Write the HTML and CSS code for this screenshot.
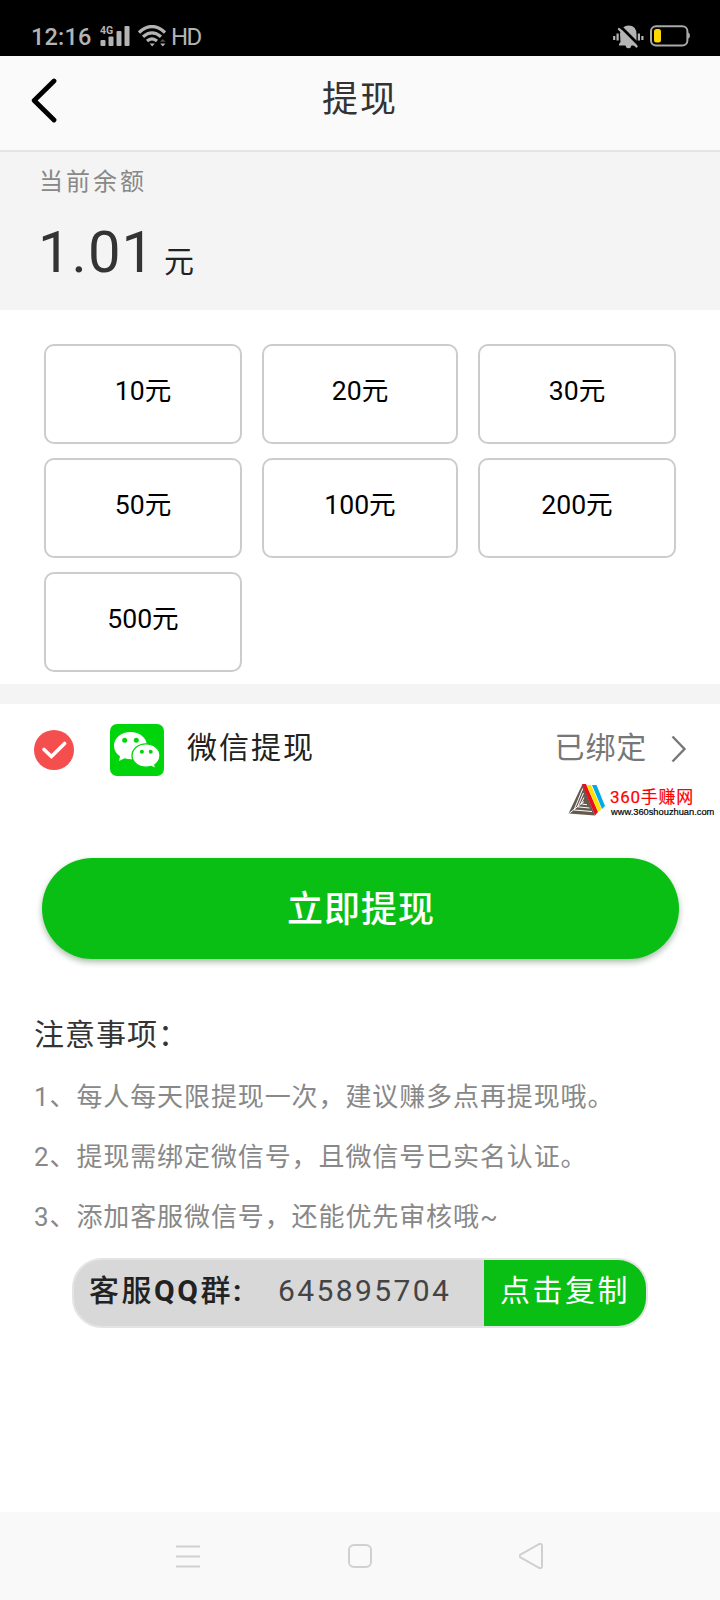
FILE: index.html
```html
<!DOCTYPE html>
<html lang="zh-CN">
<head>
<meta charset="utf-8">
<title>提现</title>
<link rel="stylesheet" href="styles.css">
</head>
<body>
<div class="status">
  <span class="time">12:16</span>
  <svg class="signal" width="30" height="22" viewBox="0 0 30 22" fill="#b4b4b4"><text x="0" y="8.6" class="net">4G</text><rect x="0.5" y="15" width="5" height="6" rx="1"/><rect x="8.5" y="11.5" width="5" height="9.5" rx="1"/><rect x="16.5" y="6" width="5" height="15" rx="1"/><rect x="24.5" y="1" width="5" height="20" rx="1"/></svg>
  <svg class="wifi" width="28" height="22" viewBox="0 0 28 22" fill="none" stroke="#b4b4b4" stroke-width="3.2"><path d="M1 7.500Q14-4.500 27 7.500M5 11.800Q14 4 23 11.800M9 16Q14 11.600 19 16"/><path d="M11.600 18.600h5.200L14.200 21.600zM22.200 18.600h5.200L24.800 21.600z" fill="#b4b4b4" stroke="none"/><path d="M22 16.700h5.500L24.800 14z" fill="#555" stroke="none"/></svg>
  <span class="hd">HD</span>
  <svg class="mute" width="32" height="24" viewBox="0 0 32 24"><path d="M1.200 11v4M4.600 8.500v7M25.900 8.500v7M29.400 11v4" stroke="#b4b4b4" stroke-width="2.200" fill="none"/><path d="M7 8.500Q9 0.500 15.500 0.500Q23.500 0.500 23.500 9.500V19L25 20.500H18.500Q18 23.200 15.500 23.200Q13 23.200 12.400 20.500H6V19L7.500 17Z" fill="#b4b4b4"/><path d="M8 2L26 20" stroke="#000" stroke-width="2.800"/><path d="M6 4L23.500 21.500" stroke="#b4b4b4" stroke-width="2.400" stroke-linecap="round"/></svg>
  <svg class="battery" width="41" height="22" viewBox="0 0 41 22"><rect x="1" y="1.200" width="36.400" height="19.400" rx="5" fill="none" stroke="#a9a9a9" stroke-width="2"/><path d="M38 7.500q2 .500 2 3t-2 3z" fill="#a9a9a9"/><rect x="4" y="4" width="7" height="13.600" rx="2.500" fill="#ffd800"/></svg>
</div>
<header class="header">
  <svg class="back" width="28" height="46" viewBox="0 0 28 46"><path d="M24 3L4.200 22.500L24 42" fill="none" stroke="#000" stroke-width="4.800" stroke-linecap="round" stroke-linejoin="round"/></svg>
  <h1 class="title">提现</h1>
</header>
<section class="balance">
  <div class="balance-label">当前余额</div>
  <div class="balance-row"><span class="amount">1.01</span><span class="unit">元</span></div>
</section>
<section class="options">
  <div class="option">10元</div><div class="option">20元</div><div class="option">30元</div>
  <div class="option">50元</div><div class="option">100元</div><div class="option">200元</div>
  <div class="option">500元</div>
</section>
<section class="method">
  <svg class="check" width="40" height="40" viewBox="0 0 40 40"><circle cx="20" cy="20" r="20" fill="#f54e4e"/><path d="M10 19.500L17.400 26.600L30.600 13.400" fill="none" stroke="#fff" stroke-width="3.600" stroke-linecap="round" stroke-linejoin="miter"/></svg>
  <svg class="wechat" width="54" height="52" viewBox="0 0 54 52"><rect width="54" height="52" rx="7" fill="#00d40b"/><path d="M20.500 8C11.200 8 4 14 4 21.800C4 26.300 6.300 29.700 10 32.300L9 37L14.600 34.200Q17.400 35.200 21 35.200C30.500 35.200 37 29.300 37 21.800C37 14 29.700 8 20.500 8Z" fill="#fff"/><path d="M36 19.800C28.200 19.800 22 24.900 22 31.500C22 38 28.200 43.200 36 43.200Q38.600 43.200 41.200 42.400L45.800 44.500L44.800 40.800C48 38.600 50 35.400 50 31.500C50 24.900 43.800 19.800 36 19.800Z" fill="#fff" stroke="#00d40b" stroke-width="1.300"/><g fill="#00d40b"><circle cx="14.700" cy="16.300" r="2.500"/><circle cx="26.300" cy="16.300" r="2.500"/><circle cx="31.900" cy="27.800" r="2"/><circle cx="40.700" cy="27.800" r="2"/></g></svg>
  <span class="method-name">微信提现</span>
  <span class="bound">已绑定</span>
  <svg class="chevron" width="16" height="28" viewBox="0 0 16 28"><path d="M1.500 1.500L13.500 14L1.500 26.500" fill="none" stroke="#777" stroke-width="2.400"/></svg>
</section>
<div class="brand">
  <svg class="brand-logo" width="38" height="32" viewBox="0 0 38 32"><path d="M14.500 0L0.500 29.500L27 31.500Z" fill="#655a50"/><path d="M14.800 4.500L6 26L24 27.500M15.500 9L9.500 22.800L21.500 24M16 13.500L12.800 19.800L19 20.800M1 29.500L16 17.500" stroke="#fff" stroke-width="1" fill="none"/><path d="M14 0H18L30 28L27 31.500Z" fill="#e60f1c"/><path d="M18.500 1H23L33.500 25L30.500 28Z" fill="#ffe100"/><path d="M24 1H28.500L37 22L34 25Z" fill="#00a9e8"/></svg>
  <div class="brand-text"><div class="brand-name">360手赚网</div><div class="brand-url">www.360shouzhuan.com</div></div>
</div>
<button class="submit">立即提现</button>
<section class="notes">
  <h2 class="notes-title">注意事项：</h2>
  <p class="note">1、每人每天限提现一次，建议赚多点再提现哦。</p>
  <p class="note">2、提现需绑定微信号，且微信号已实名认证。</p>
  <p class="note">3、添加客服微信号，还能优先审核哦~</p>
</section>
<div class="group">
  <span class="group-label">客服<b>QQ</b>群<b>:</b></span>
  <span class="group-number">645895704</span>
  <span class="copy">点击复制</span>
</div>
<nav class="nav">
  <svg width="26" height="28" viewBox="0 0 26 28"><path d="M1 4.500h24M1 14.500h24M1 24.500h24" stroke="#d0d0d0" stroke-width="2"/></svg>
  <svg width="26" height="28" viewBox="0 0 26 28"><rect x="2" y="3" width="22" height="22" rx="5" fill="none" stroke="#d0d0d0" stroke-width="2"/></svg>
  <svg width="26" height="28" viewBox="0 0 26 28"><path d="M1.500 12.700L20 2.200Q23 1 23 4V24Q23 27 20 25.800L1.500 15.300Q-0.500 14 1.500 12.700Z" fill="none" stroke="#d0d0d0" stroke-width="2"/></svg>
</nav>
</body>
</html>
```
FILE: styles.css
```css
* { box-sizing: border-box; }
body {
  margin: 0;
  width: 720px;
  height: 1600px;
  display: flex;
  flex-direction: column;
  overflow: hidden;
  background: #fff;
  color: #222;
  font-family: Roboto, "Noto Sans CJK SC", sans-serif;
}
svg { display: block; flex: none; }
h1, h2, p { margin: 0; font-weight: 400; }
.status {
  height: 56px;
  flex: none;
  background: #000;
  color: #b4b4b4;
  display: flex;
  align-items: flex-start;
  padding: 25px 29px 0 31px;
  font-size: 24px;
  line-height: 24px;
}
.time { width: 69px; letter-spacing: 0.2px; font-weight: 500; font-size: 23.5px; }
.net { font-size: 10.5px; font-weight: 700; }
.wifi { margin-left: 8px; }
.hd { margin-left: 5px; letter-spacing: -1.7px; font-size: 24px; }
.mute { margin-left: auto; }
.battery { margin-left: 5px; }
.header {
  height: 96px;
  flex: none;
  background: #fafafa;
  border-bottom: 2px solid #e4e4e4;
  display: grid;
  grid-template-columns: 60px 1fr 60px;
  padding: 0 30px;
}
.back { margin-top: 22px; }
.title { text-align: center; font-size: 36px; letter-spacing: 2px; line-height: 88px; color: #333; }
.balance { height: 158px; flex: none; background: #f4f4f4; padding: 14px 38px; }
.balance-label { font-size: 24px; line-height: 32px; letter-spacing: 3px; color: #888; padding-left: 1px; }
.balance-row { display: flex; align-items: baseline; margin-top: 19px; line-height: 70px; }
.amount { font-size: 58px; color: #333; letter-spacing: 1px; }
.unit { font-size: 30px; margin-left: 9px; }
.options {
  height: 374px;
  flex: none;
  display: grid;
  grid-template-columns: 198px 196px 198px;
  grid-auto-rows: 100px;
  column-gap: 20px;
  row-gap: 14px;
  padding: 34px 44px 0;
}
.option {
  border: 2px solid #ccc;
  border-radius: 10px;
  text-align: center;
  font-size: 26.6px;
  line-height: 89px;
  color: #000;
}
.method {
  height: 100px;
  flex: none;
  border-top: 20px solid #f4f4f4;
  padding: 20px 33px 0 34px;
  display: flex;
  align-items: flex-start;
  font-size: 30px;
  line-height: 48px;
}
.check { margin-top: 6px; }
.wechat { margin-left: 36px; }
.method-name { margin-left: 23px; letter-spacing: 2px; }
.bound { margin-left: auto; letter-spacing: 0.8px; color: #777; }
.chevron { margin: 11px 0 0 24px; }
.brand { display: flex; height: 74px; flex: none; padding-left: 568px; }
.brand-text { margin-left: 4px; }
.brand-name { font-size: 17px; line-height: 20px; letter-spacing: 0.7px; margin-top: 3px; color: #f00; white-space: nowrap; -webkit-text-stroke: 0.2px #f00; }
.brand-url { font: 9.3px/11px "Liberation Sans", sans-serif; color: #000; -webkit-text-stroke: 0.2px #000; margin-left: 1px; }
.submit {
  display: block;
  width: 637px;
  height: 101px;
  flex: none;
  margin: 0 auto;
  padding: 0;
  border: 0;
  border-radius: 51px;
  background: #0abf14;
  color: #fff;
  box-shadow: 0 3px 6px rgba(0, 60, 0, 0.35);
  font: 500 36px/104px Roboto, "Noto Sans CJK SC", sans-serif;
  letter-spacing: 1px;
  text-indent: 2px;
}
.notes { padding: 46px 34px 0 34px; height: 299px; flex: none; }
.notes-title { font-size: 30px; letter-spacing: 1px; line-height: 60px; margin-bottom: 2px; color: #333; }
.note { font-size: 26px; letter-spacing: 0.9px; line-height: 60px; color: #888; white-space: nowrap; }
.group {
  width: 576px;
  height: 70px;
  flex: none;
  margin-left: 72px;
  border: 2px solid #e4e4e4;
  border-radius: 30px;
  background: #d8d8d8;
  overflow: hidden;
  display: grid;
  grid-template-columns: 204px 206px 162px;
  font-size: 30px;
  line-height: 62px;
  white-space: nowrap;
}
.group-label { padding-left: 15px; font-weight: 500; letter-spacing: 2.500px; }
.group-label b { font-weight: 700; }
.group-number { letter-spacing: 2.400px; color: #444; }
.copy { background: #0abf14; color: #fff; padding-left: 16px; letter-spacing: 2.500px; }
.nav {
  height: 88px;
  flex: none;
  margin-top: auto;
  background: #f9f9f9;
  display: flex;
  justify-content: space-between;
  align-items: center;
  padding: 0 175px;
}
```
